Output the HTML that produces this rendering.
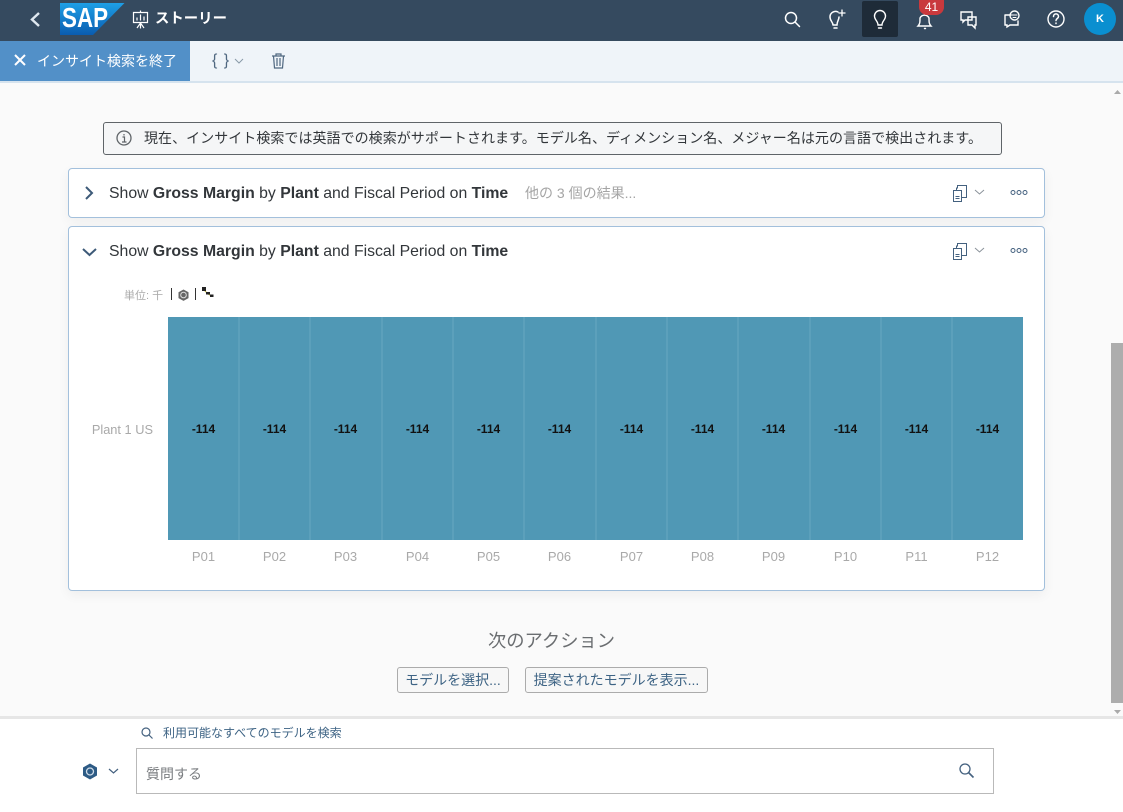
<!DOCTYPE html>
<html lang="ja"><head><meta charset="utf-8"><style>
html,body{margin:0;padding:0}
body{width:1123px;height:812px;position:relative;overflow:hidden;background:#fff;font-family:"Liberation Sans","Noto Sans CJK JP",sans-serif}
.a{position:absolute;white-space:nowrap}
svg{position:absolute;overflow:visible}
.card{position:absolute;left:68px;width:975px;background:#fff;border:1px solid #a3c0dc;border-radius:4px;box-shadow:0 4px 12px rgba(0,0,0,.05)}
.t{font-size:15.8px;color:#32363a;line-height:18px}
.t b{color:#32363a}
.btn{position:absolute;top:667px;height:24px;border:1px solid #ababab;border-radius:3px;background:#f7f7f7;font-size:14px;color:#3d6384;line-height:24px;text-align:center;white-space:nowrap}
.v{position:absolute;top:422px;width:71px;text-align:center;font-size:12px;font-weight:bold;color:#111;line-height:14px}
.x{position:absolute;top:549px;width:71px;text-align:center;font-size:13px;color:#a9a9a9;line-height:15px}
</style></head><body>
<div class="a" style="left:0;top:0;width:1123px;height:41px;background:#354a5f"></div>
<svg style="left:0;top:0" width="1123" height="41" fill="none" stroke="#fff">
<defs><linearGradient id="sap" x1="0" y1="0" x2="0" y2="1"><stop offset="0" stop-color="#1e9fe6"/><stop offset="1" stop-color="#0a5cb0"/></linearGradient></defs>
<path d="M39 13l-7 6.500 7 6.500" stroke-width="2.400" stroke="#dfe8f0"/>
<path d="M60 3h64.500L93 35H60z" fill="url(#sap)" stroke="none"/>
<path d="M133.500 12.500h14v10h-14zM140.500 10.500v2M140.500 22.500v6M137 28l3.500-5 3.500 5M137 20.500v-3M140.500 20.500v-6M144 20.500v-4" stroke-width="1.200"/>
<g stroke="#fff" stroke-width="1.500" stroke-linecap="round"><circle cx="791" cy="18" r="5.500"/><path d="M795 22l4.500 4.500"/>
<path d="M833 25c0-3-3-4-3-8a5.500 5.500 0 0 1 8-5M839 17c0 3-2 4-2 8h-4M834 28h3"/><path d="M842 10v6M839 13h6" stroke-width="1.300"/></g>
<rect x="862" y="1" width="36" height="36" rx="2" fill="#1e2b38" stroke="none"/>
<g stroke-width="1.400" stroke-linecap="round" stroke="#fff"><path d="M878 25c0-4-3.500-5-3.500-9a5.500 5.500 0 0 1 11 0c0 4-3.500 5-3.500 9zM878.500 28h3"/>
<path d="M918 26c2-2 2-4 2-8a5 5 0 0 1 9 0c0 4 0 6 2 8zM924.500 28.500h1"/>
<path d="M961 12h11v8h-7l-2 2v-2h-2zM968 17h8v8h-1v3l-3-3h-4z"/>
<path d="M1005 15h6M1005 15v10h2v2l3-2h8v-4"/><circle cx="1014.500" cy="15.500" r="4.500"/><path d="M1012 15h5M1013 17.500h3" stroke-width="1"/>
<circle cx="1056" cy="19" r="8"/><path d="M1053.500 16.500c0-3.500 5-3.500 5 0 0 2-2.500 2-2.500 4M1056 23v.5" stroke-width="1.500"/></g>
</svg>
<div class="a" style="left:62px;top:2px;font-size:28px;line-height:32px;font-weight:bold;color:#fff;transform:scaleX(.8);transform-origin:left">SAP</div>
<div class="a" style="left:155px;top:9px;font-size:14.4px;line-height:20px;font-weight:bold;color:#fff">ストーリー</div>
<div class="a" style="left:919px;top:0;width:25px;height:15px;background:#c9393d;border-radius:0 0 8px 8px;color:#fff;font-size:12px;line-height:14px;text-align:center">41</div>
<div class="a" style="left:1084px;top:3px;width:32px;height:32px;border-radius:50%;background:#0a8fd0;color:#fff;font-size:11px;font-weight:bold;line-height:32px;text-align:center">K</div>

<div class="a" style="left:0;top:41px;width:1123px;height:40px;background:#eff4f9;border-bottom:2px solid #d6e3ee"></div>
<div class="a" style="left:0;top:41px;width:190px;height:40px;background:#5290c8"></div>
<svg style="left:0;top:41px" width="300" height="40" fill="none">
<path d="M15 14l10 10M25 14L15 24" stroke="#fff" stroke-width="2"/>
<path d="M235 18l4 4 4-4" stroke="#8a9aa8" stroke-width="1"/>
<path d="M272 15h13M276 15v-2h5v2M273.500 15l1 12h8l1-12M277 17v8M280 17v8" stroke="#4f6780" stroke-width="1.200"/>
</svg>
<div class="a" style="left:37px;top:51px;font-size:14px;line-height:20px;color:#fff">インサイト検索を終了</div>
<div class="a" style="left:212px;top:51px;font-size:16px;line-height:20px;color:#4f6780;letter-spacing:1px">{ }</div>

<div class="a" style="left:0;top:83px;width:1123px;height:634px;background:#fafafa"></div>
<div class="a" style="left:1111px;top:343px;width:12px;height:360px;background:#adadad"></div>
<svg style="left:1111px;top:85px" width="12" height="630"><path d="M3 9l3.500-4 3.500 4z" fill="#aaa"/><path d="M3 625l3.500 4 3.500-4z" fill="#aaa"/></svg>

<div class="a" style="left:103px;top:122px;width:897px;height:31px;background:#f5f6f7;border:1px solid #5f6468;border-radius:3px"></div>
<svg style="left:115px;top:130px" width="18" height="18" fill="none" stroke="#5f6468"><circle cx="9" cy="8" r="7" stroke-width="1.300"/><path d="M7.500 7h2v5M7 12h4.500M9 4v1.500" stroke-width="1.200"/></svg>
<div class="a" style="left:144px;top:129px;font-size:14px;line-height:18px;color:#32363a;letter-spacing:.042px">現在、インサイト検索では英語での検索がサポートされます。モデル名、ディメンション名、メジャー名は元の言語で検出されます。</div>

<div class="card" style="top:168px;height:48px"></div>
<svg style="left:80px;top:185px" width="20" height="16" fill="none"><path d="M6 2l6 6-6 6" stroke="#3d5a78" stroke-width="2"/></svg>
<div class="a t" style="left:109px;top:185px">Show <b>Gross Margin</b> by <b>Plant</b> and Fiscal Period on <b>Time</b></div>
<div class="a" style="left:525px;top:184px;font-size:14px;line-height:18px;color:#a5a5a5">他の 3 個の結果...</div>

<div class="card" style="top:226px;height:363px"></div>
<svg style="left:81px;top:244px" width="20" height="16" fill="none"><path d="M2 5l6.500 6L15 5" stroke="#3d5a78" stroke-width="2"/></svg>
<div class="a t" style="left:109px;top:243px">Show <b>Gross Margin</b> by <b>Plant</b> and Fiscal Period on <b>Time</b></div>

<svg style="left:950px;top:183px" width="80" height="80" fill="none" stroke="#44617f" stroke-width="1">
<g><path d="M3.500 7.500h8v11h-8zM5.500 13.500h4M5.500 15.500h4M6.500 7.500V5h1V2.500h9v12h-5"/><path d="M25 7l4.500 4L34 7" stroke="#8a929a"/><circle cx="63" cy="9.500" r="2"/><circle cx="69" cy="9.500" r="2"/><circle cx="75" cy="9.500" r="2"/></g>
<g transform="translate(0,58)"><path d="M3.500 7.500h8v11h-8zM5.500 13.500h4M5.500 15.500h4M6.500 7.500V5h1V2.500h9v12h-5"/><path d="M25 7l4.500 4L34 7" stroke="#8a929a"/><circle cx="63" cy="9.500" r="2"/><circle cx="69" cy="9.500" r="2"/><circle cx="75" cy="9.500" r="2"/></g>
</svg>

<div class="a" style="left:124px;top:289px;font-size:11px;line-height:15px;color:#a9a9a9">単位: 千</div>
<svg style="left:170px;top:286px" width="50" height="20" fill="none">
<path d="M1.500 2v12M25.500 2v12" stroke="#333"/>
<path d="M13.500 3.500l5 2.800v5.800l-5 2.800-5-2.800V6.300z" fill="#666"/><circle cx="13.500" cy="9" r="2.800" stroke="#ddd" stroke-width="1"/>
<path d="M34 4l4 4 4 2" stroke="#b5a93a"/><rect x="32" y="1" width="4" height="4" fill="#222"/><rect x="36" y="6" width="4" height="2.500" fill="#222"/><rect x="40" y="8.500" width="3.500" height="2.500" fill="#222"/>
</svg>
<div class="a" style="right:970px;top:422px;font-size:12.8px;line-height:15px;color:#a9a9a9">Plant 1 US</div>

<div class="a" style="left:168px;top:317px;width:855px;height:223px;background:#5098b5"></div>
<svg style="left:168px;top:317px" width="855" height="223"><g stroke="#69a7c1" stroke-width="1"><path d="M71 0v223M142 0v223M214 0v223M285 0v223M356 0v223M428 0v223M499 0v223M570 0v223M642 0v223M713 0v223M784 0v223"/></g></svg>
<div class="v" style="left:168px">-114</div><div class="v" style="left:239px">-114</div><div class="v" style="left:310px">-114</div><div class="v" style="left:382px">-114</div><div class="v" style="left:453px">-114</div><div class="v" style="left:524px">-114</div><div class="v" style="left:596px">-114</div><div class="v" style="left:667px">-114</div><div class="v" style="left:738px">-114</div><div class="v" style="left:810px">-114</div><div class="v" style="left:881px">-114</div><div class="v" style="left:952px">-114</div>
<div class="x" style="left:168px">P01</div><div class="x" style="left:239px">P02</div><div class="x" style="left:310px">P03</div><div class="x" style="left:382px">P04</div><div class="x" style="left:453px">P05</div><div class="x" style="left:524px">P06</div><div class="x" style="left:596px">P07</div><div class="x" style="left:667px">P08</div><div class="x" style="left:738px">P09</div><div class="x" style="left:810px">P10</div><div class="x" style="left:881px">P11</div><div class="x" style="left:952px">P12</div>

<div class="a" style="left:488px;top:630px;font-size:18.3px;line-height:22px;color:#6a6d70">次のアクション</div>
<div class="btn" style="left:397px;width:110px">モデルを選択...</div>
<div class="btn" style="left:525px;width:181px">提案されたモデルを表示...</div>

<div class="a" style="left:0;top:716px;width:1123px;height:3px;background:#e6e6e6"></div>
<svg style="left:140px;top:726px" width="16" height="16" fill="none" stroke="#44617f" stroke-width="1.200"><circle cx="6" cy="6" r="4"/><path d="M9 9l3.500 3.500"/></svg>
<div class="a" style="left:163px;top:725px;font-size:12px;line-height:16px;color:#3d6384">利用可能なすべてのモデルを検索</div>
<svg style="left:80px;top:762px" width="44" height="20" fill="none">
<path d="M10 1.500l7 4v8l-7 4-7-4v-8z" fill="#2d5b85"/><circle cx="10" cy="9.500" r="3.500" stroke="#cfdce8" stroke-width="1.300"/>
<path d="M29 7l4.500 4L38 7" stroke="#44617f" stroke-width="1.200"/></svg>
<div class="a" style="left:136px;top:748px;width:856px;height:44px;background:#fff;border:1px solid #b9b9b9"></div>
<div class="a" style="left:146px;top:765px;font-size:14px;line-height:18px;color:#7a7d80">質問する</div>
<svg style="left:958px;top:762px" width="18" height="18" fill="none" stroke="#44617f" stroke-width="1.300"><circle cx="7" cy="7" r="5"/><path d="M10.500 10.500l5 5" stroke-width="1.600"/></svg>
</body></html>
